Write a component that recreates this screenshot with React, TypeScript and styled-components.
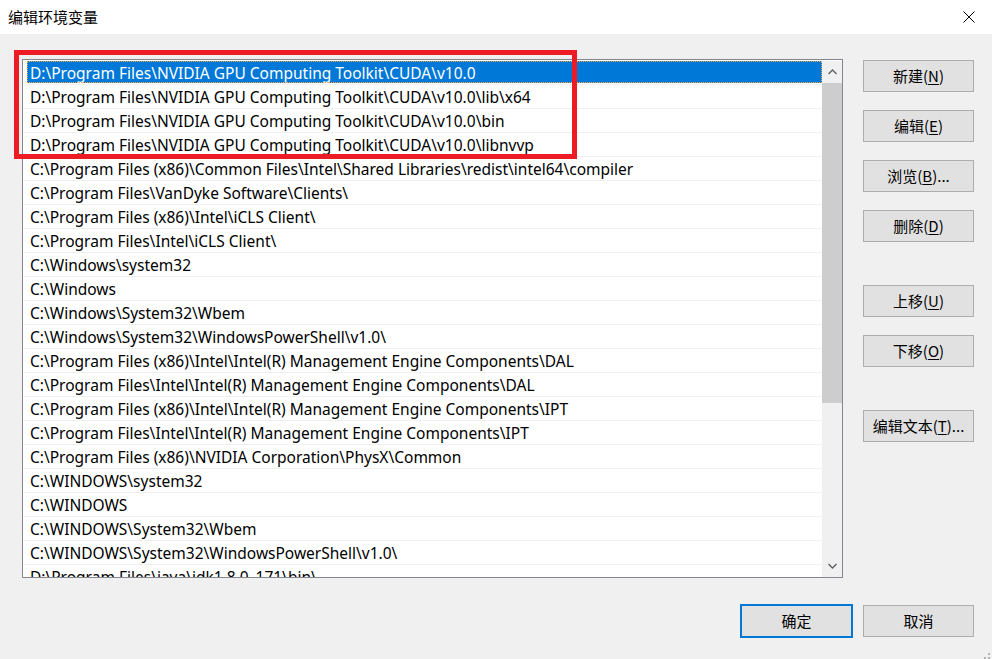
import * as React from 'react';
import styled, { createGlobalStyle } from 'styled-components';

const Global = createGlobalStyle`
    html, body {
        margin: 0;
        padding: 0;
        background: #f0f0f0;
    }
    * {
        box-sizing: border-box;
    }
`

const Window = styled.div`
    position: relative;
    width: 992px;
    height: 659px;
    display: flex;
    flex-direction: column;
    background: #f0f0f0;
    font-family: 'Noto Sans', 'Noto Sans CJK SC', sans-serif;
    color: #000;
    overflow: hidden;
`

const TitleBar = styled.div`
    height: 34px;
    background: #fff;
    display: flex;
    align-items: center;
    justify-content: space-between;
    padding-left: 8px;
`

const Title = styled.div`
    font-family: 'Noto Sans CJK SC', sans-serif;
    font-size: 15px;
    margin-top: -2px;
`

const CloseBox = styled.div`
    width: 46px;
    height: 34px;
    display: flex;
    align-items: center;
    justify-content: center;
`

const Body = styled.div`
    flex: 1;
    display: flex;
    flex-direction: column;
    padding: 25px 18px 0 22px;
`

const Main = styled.div`
    display: flex;
    gap: 20px;
`

const ListBox = styled.div`
    width: 821px;
    height: 519px;
    border: 1px solid #828790;
    background: #fff;
    display: flex;
    padding-top: 1px;
`

const Rows = styled.div`
    flex: 1;
    overflow: hidden;
`

const Row = styled.div`
    height: 24px;
    border-bottom: 1px solid #f0f0f0;
    display: flex;
    padding: 0 0 1px 4px;
`

const Cell = styled.div<{ $selected?: boolean }>`
    flex: 1;
    display: flex;
    align-items: center;
    padding: 1px 0 0 3px;
    font-size: 15.5px;
    white-space: nowrap;
    background: ${p => (p.$selected ? '#0078d7' : 'transparent')};
    color: ${p => (p.$selected ? '#fff' : '#000')};
    outline: ${p => (p.$selected ? '1px dotted #f7a84a' : 'none')};
    outline-offset: -1px;
`

const ScrollBar = styled.div`
    width: 20px;
    background: #f0f0f0;
    display: flex;
    flex-direction: column;
`

const Arrow = styled.div`
    height: 22px;
    display: flex;
    align-items: center;
    justify-content: center;
`

const Track = styled.div`
    flex: 1;
`

const Thumb = styled.div`
    height: 320px;
    background: #cdcdcd;
`

const Buttons = styled.div`
    display: flex;
    flex-direction: column;
    padding-top: 1px;
`

const Button = styled.div<{ $gap?: number; $default?: boolean }>`
    width: 111px;
    height: 32px;
    margin-top: ${p => p.$gap ?? 0}px;
    background: #e1e1e1;
    border: 1px solid ${p => (p.$default ? '#0078d7' : '#adadad')};
    box-shadow: ${p => (p.$default ? '0 0 0 1px #0078d7' : 'none')};
    display: flex;
    align-items: center;
    justify-content: center;
    font-family: 'Noto Sans CJK SC', sans-serif;
    font-size: 15px;
    padding-bottom: 1px;

    u {
        text-underline-offset: 2px;
    }
`

const Footer = styled.div`
    display: flex;
    justify-content: flex-end;
    gap: 11px;
    margin-top: 27px;
`

const Grip = styled.div`
    position: absolute;
    right: 2px;
    bottom: 1px;
    width: 12px;
    height: 12px;
`

const Marker = styled.div`
    position: absolute;
    left: 14px;
    top: 50px;
    width: 563px;
    height: 109px;
    border: 5px solid #ed1c24;
    pointer-events: none;
`

const paths = [
    'D:\\Program Files\\NVIDIA GPU Computing Toolkit\\CUDA\\v10.0',
    'D:\\Program Files\\NVIDIA GPU Computing Toolkit\\CUDA\\v10.0\\lib\\x64',
    'D:\\Program Files\\NVIDIA GPU Computing Toolkit\\CUDA\\v10.0\\bin',
    'D:\\Program Files\\NVIDIA GPU Computing Toolkit\\CUDA\\v10.0\\libnvvp',
    'C:\\Program Files (x86)\\Common Files\\Intel\\Shared Libraries\\redist\\intel64\\compiler',
    'C:\\Program Files\\VanDyke Software\\Clients\\',
    'C:\\Program Files (x86)\\Intel\\iCLS Client\\',
    'C:\\Program Files\\Intel\\iCLS Client\\',
    'C:\\Windows\\system32',
    'C:\\Windows',
    'C:\\Windows\\System32\\Wbem',
    'C:\\Windows\\System32\\WindowsPowerShell\\v1.0\\',
    'C:\\Program Files (x86)\\Intel\\Intel(R) Management Engine Components\\DAL',
    'C:\\Program Files\\Intel\\Intel(R) Management Engine Components\\DAL',
    'C:\\Program Files (x86)\\Intel\\Intel(R) Management Engine Components\\IPT',
    'C:\\Program Files\\Intel\\Intel(R) Management Engine Components\\IPT',
    'C:\\Program Files (x86)\\NVIDIA Corporation\\PhysX\\Common',
    'C:\\WINDOWS\\system32',
    'C:\\WINDOWS',
    'C:\\WINDOWS\\System32\\Wbem',
    'C:\\WINDOWS\\System32\\WindowsPowerShell\\v1.0\\',
    'D:\\Program Files\\java\\jdk1.8.0_171\\bin\\',
]

const Chevron = ({ up }: { up?: boolean }) => (
    <svg width="9" height="6" viewBox="0 0 9 6">
        <path
            d={up ? 'M0.5 5 L4.5 1 L8.5 5' : 'M0.5 1 L4.5 5 L8.5 1'}
            fill="none"
            stroke="#606060"
            strokeWidth="1.4"
        />
    </svg>
)

export default function App() {
    return (
        <Window>
            <Global />
            <TitleBar>
                <Title>编辑环境变量</Title>
                <CloseBox>
                    <svg width="12" height="12" viewBox="0 0 12 12">
                        <path d="M0.5 0.5 L11.5 11.5 M11.5 0.5 L0.5 11.5" stroke="#000" strokeWidth="1" />
                    </svg>
                </CloseBox>
            </TitleBar>
            <Body>
                <Main>
                    <ListBox>
                        <Rows>
                            {paths.map((p, i) => (
                                <Row key={i}>
                                    <Cell $selected={i === 0}>{p}</Cell>
                                </Row>
                            ))}
                        </Rows>
                        <ScrollBar>
                            <Arrow><Chevron up /></Arrow>
                            <Track>
                                <Thumb />
                            </Track>
                            <Arrow><Chevron /></Arrow>
                        </ScrollBar>
                    </ListBox>
                    <Buttons>
                        <Button>新建(<u>N</u>)</Button>
                        <Button $gap={18}>编辑(<u>E</u>)</Button>
                        <Button $gap={18}>浏览(<u>B</u>)...</Button>
                        <Button $gap={18}>删除(<u>D</u>)</Button>
                        <Button $gap={43}>上移(<u>U</u>)</Button>
                        <Button $gap={18}>下移(<u>O</u>)</Button>
                        <Button $gap={43}>编辑文本(<u>T</u>)...</Button>
                    </Buttons>
                </Main>
                <Footer>
                    <Button $default>确定</Button>
                    <Button>取消</Button>
                </Footer>
            </Body>
            <Marker />
            <Grip>
                <svg width="12" height="12" viewBox="0 0 12 12" fill="#b4b4b4">
                    <rect x="10" y="2" width="2" height="2" />
                    <rect x="6" y="6" width="2" height="2" />
                    <rect x="10" y="6" width="2" height="2" />
                    <rect x="2" y="10" width="2" height="2" />
                    <rect x="6" y="10" width="2" height="2" />
                    <rect x="10" y="10" width="2" height="2" />
                </svg>
            </Grip>
        </Window>
    );
}
